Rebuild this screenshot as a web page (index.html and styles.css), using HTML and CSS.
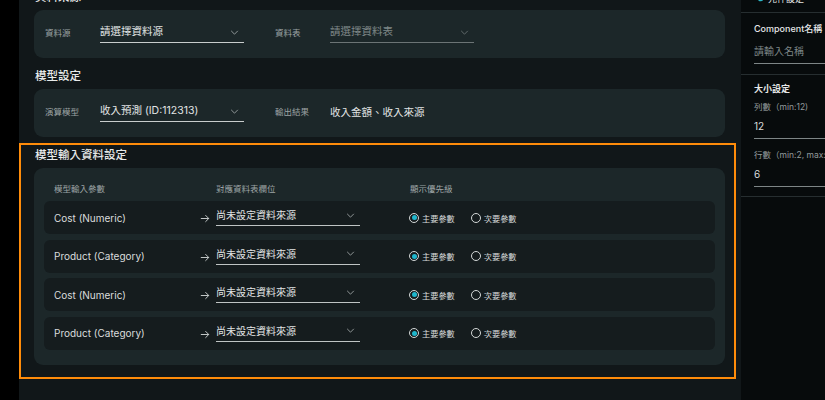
FILE: index.html
```html
<!DOCTYPE html>
<html lang="zh-Hant">
<head>
<meta charset="utf-8">
<title>模型設定</title>
<link rel="stylesheet" href="styles.css">
</head>
<body>
<div class="app">
  <div class="rail"></div>
  <main class="main">
    <section class="section first">
      <h2 class="title">資料來源</h2>
      <div class="card">
        <div class="field">
          <span class="label">資料源</span>
          <div class="select"><span>請選擇資料源</span><svg class="chev" viewBox="0 0 10 6"><polyline points="1,1 5,5 9,1"/></svg></div>
        </div>
        <div class="field">
          <span class="label">資料表</span>
          <div class="select placeholder"><span>請選擇資料表</span><svg class="chev" viewBox="0 0 10 6"><polyline points="1,1 5,5 9,1"/></svg></div>
        </div>
      </div>
    </section>

    <section class="section">
      <h2 class="title">模型設定</h2>
      <div class="card">
        <div class="field">
          <span class="label">演算模型</span>
          <div class="select"><span>收入預測 (ID:112313)</span><svg class="chev" viewBox="0 0 10 6"><polyline points="1,1 5,5 9,1"/></svg></div>
        </div>
        <div class="field">
          <span class="label">輸出結果</span>
          <span class="value">收入金額、收入來源</span>
        </div>
      </div>
    </section>

    <section class="section highlight">
      <h2 class="title">模型輸入資料設定</h2>
      <div class="card table">
        <div class="thead">
          <span>模型輸入參數</span>
          <span class="th-map">對應資料表欄位</span>
          <span>顯示優先級</span>
        </div>
        <div class="row">
          <span class="param">Cost (Numeric)</span>
          <div class="map"><svg class="arrow" viewBox="0 0 12 10"><path d="M1 5H10.5M6.5 1L10.5 5L6.5 9"/></svg><div class="select sm"><span>尚未設定資料來源</span><svg class="chev" viewBox="0 0 10 6"><polyline points="1,1 5,5 9,1"/></svg></div></div>
          <div class="radios"><span class="radio on"></span><span class="rtext">主要參數</span><span class="radio"></span><span class="rtext">次要參數</span></div>
        </div>
        <div class="row">
          <span class="param">Product (Category)</span>
          <div class="map"><svg class="arrow" viewBox="0 0 12 10"><path d="M1 5H10.5M6.5 1L10.5 5L6.5 9"/></svg><div class="select sm"><span>尚未設定資料來源</span><svg class="chev" viewBox="0 0 10 6"><polyline points="1,1 5,5 9,1"/></svg></div></div>
          <div class="radios"><span class="radio on"></span><span class="rtext">主要參數</span><span class="radio"></span><span class="rtext">次要參數</span></div>
        </div>
        <div class="row">
          <span class="param">Cost (Numeric)</span>
          <div class="map"><svg class="arrow" viewBox="0 0 12 10"><path d="M1 5H10.5M6.5 1L10.5 5L6.5 9"/></svg><div class="select sm"><span>尚未設定資料來源</span><svg class="chev" viewBox="0 0 10 6"><polyline points="1,1 5,5 9,1"/></svg></div></div>
          <div class="radios"><span class="radio on"></span><span class="rtext">主要參數</span><span class="radio"></span><span class="rtext">次要參數</span></div>
        </div>
        <div class="row">
          <span class="param">Product (Category)</span>
          <div class="map"><svg class="arrow" viewBox="0 0 12 10"><path d="M1 5H10.5M6.5 1L10.5 5L6.5 9"/></svg><div class="select sm"><span>尚未設定資料來源</span><svg class="chev" viewBox="0 0 10 6"><polyline points="1,1 5,5 9,1"/></svg></div></div>
          <div class="radios"><span class="radio on"></span><span class="rtext">主要參數</span><span class="radio"></span><span class="rtext">次要參數</span></div>
        </div>
      </div>
    </section>
  </main>

  <aside class="side">
    <div class="side-head">
      <svg class="gear" viewBox="0 0 10 10"><circle cx="5" cy="5" r="3.2"/></svg>
      <span>元件設定</span>
    </div>
    <div class="side-block">
      <div class="s-label">Component名稱</div>
      <div class="s-input placeholder">請輸入名稱</div>
    </div>
    <div class="side-block size">
      <div class="s-title">大小設定</div>
      <div class="s-sub">列數（min:12)</div>
      <div class="s-input">12</div>
      <div class="s-sub gap">行數（min:2, max:20)</div>
      <div class="s-input">6</div>
    </div>
  </aside>
</div>
</body>
</html>
```

FILE: styles.css
```css
* { box-sizing: border-box; }
html, body { margin: 0; height: 100%; }
body {
  background: #111719;
  font-family: "Inter", "Noto Sans CJK TC", sans-serif;
  color: #e3e6e6;
  overflow: hidden;
}
.app { display: flex; height: 400px; }
.rail { width: 19px; background: #000; flex: none; }
.main {
  width: 722px;
  flex: none;
  background: #111719;
  padding-right: 5px;
}
.side {
  flex: 1;
  background: #070b0c;
  overflow: hidden;
  white-space: nowrap;
}

.section { padding: 0 11px 0 15px; }
.section.first { margin-top: -12px; }
.section + .section { margin-top: 9px; }
.section.highlight {
  margin-top: 6px;
  border: 2px solid #ff8c0a;
  padding: 1px 9px 12px 13px;
}
.title {
  margin: 0 0 4px;
  font-size: 11.5px;
  line-height: 18px;
  font-weight: 500;
  color: #e8eaea;
  padding-left: 1px;
}
.card {
  background: #1c2729;
  border-radius: 9px;
  height: 48px;
  padding: 0 11px;
  display: flex;
  align-items: center;
  gap: 31px;
}
.field { display: flex; align-items: center; }
.label {
  width: 55px;
  font-size: 8.5px;
  color: #9ca3a4;
  padding-bottom: 4px;
}
.value { font-size: 10.5px; color: #e2e5e5; padding-bottom: 4px; }
.select {
  width: 144px;
  display: flex;
  align-items: center;
  justify-content: space-between;
  font-size: 10.5px;
  line-height: 14px;
  color: #e2e5e5;
  border-bottom: 1px solid #c9cdcd;
  padding: 0 5px 3px 0;
}
.select.placeholder { color: #7f8788; border-bottom-color: #6c7475; }
.chev { width: 9px; height: 5px; fill: none; stroke: #a7adae; stroke-width: 1; }
.select.placeholder .chev { stroke: #6f7778; }

.card.table {
  height: auto;
  display: block;
  padding: 15px 10px 15px;
}
.thead, .row {
  display: grid;
  grid-template-columns: 146px 210px 1fr;
  align-items: center;
  padding: 0 10px;
}
.thead {
  font-size: 8.5px;
  line-height: 12px;
  color: #9ea5a6;
  margin-bottom: 6px;
}
.th-map { padding-left: 16px; }
.row {
  height: 33px;
  background: #151c1e;
  border-radius: 6px;
}
.row + .row { margin-top: 5.67px; }
.param { font-size: 10px; color: #dadddd; }
.map { display: flex; align-items: center; gap: 6px; }
.arrow { width: 10px; height: 9px; fill: none; stroke: #d2d6d6; stroke-width: 1.1; margin-top: 2px; }
.select.sm { font-size: 10px; line-height: 12px; padding-bottom: 4px; border-bottom-color: #bfc4c4; }
.radios { display: flex; align-items: center; margin-left: -1px; }
.radio {
  width: 10px; height: 10px;
  border: 1px solid #d3d7d7;
  border-radius: 50%;
  position: relative;
  flex: none;
}
.radio.on::after {
  content: "";
  position: absolute;
  left: 1.5px; top: 1.5px;
  width: 5px; height: 5px;
  border-radius: 50%;
  background: #1fb6cc;
}
.rtext { font-size: 8.2px; color: #d7dbdb; margin-left: 3px; margin-right: 16px; }

.side-head {
  height: 28px;
  margin-top: -15px;
  border-bottom: 1px solid #262e30;
  display: flex;
  align-items: center;
  gap: 4px;
  padding-left: 16px;
  font-size: 9px;
  color: #e3e6e6;
}
.gear { width: 7px; height: 7px; fill: none; stroke: #2bb6c5; stroke-width: 1.8; }
.side-block {
  padding: 9px 0 10px 13px;
  border-bottom: 1px solid #262e30;
  width: 260px;
}
.s-label { font-size: 9px; line-height: 14px; font-weight: 500; color: #e6e8e8; margin-bottom: 8px; }
.s-input {
  font-size: 10px; line-height: 14px; color: #d9dcdc;
  border-bottom: 1px solid #7d8586;
  padding-bottom: 5px;
  width: 200px;
}
.s-input.placeholder { color: #7e8687; border-bottom-color: #7d8586; }
.side-block.size { padding: 7px 0 9px 13px; }
.s-title { font-size: 9px; line-height: 14px; font-weight: 600; color: #e6e8e8; }
.s-sub { font-size: 8.5px; line-height: 14px; color: #949b9c; margin-top: 4px; margin-bottom: 5px; }
.s-sub.gap { margin-top: 9px; }
```
